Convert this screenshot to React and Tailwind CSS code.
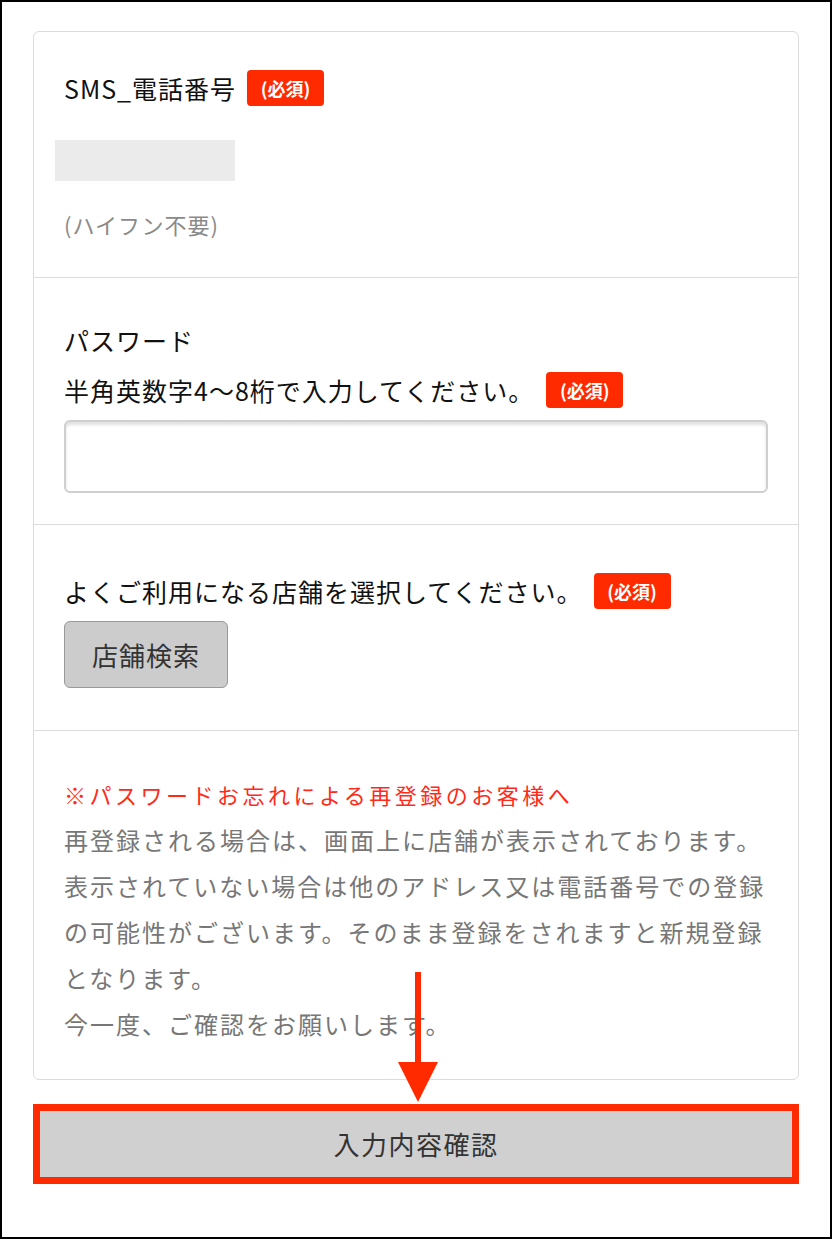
export default function App() {
  const Badge = () => (
    <span className="inline-flex items-center justify-center w-[77px] h-[36px] rounded-[4px] bg-[#ff2a00] text-white text-[18px] font-bold leading-none">
      (必須)
    </span>
  );
  return (
    <div className="relative w-[832px] h-[1239px] border-2 border-black bg-white pt-[29px] px-[31px] font-['Noto_Sans_CJK_JP',sans-serif] text-[#111]">
      <div className="border border-[#dcdcdc] rounded-[6px] flex flex-col">
        {/* Section 1 */}
        <div className="px-[30px] pt-[38px] pb-[38px] border-b border-[#dcdcdc]">
          <div className="flex items-center h-[36px]">
            <span className="text-[25px] leading-none tracking-[1px]">SMS_電話番号</span>
            <span className="ml-[11px]"><Badge /></span>
          </div>
          <div className="-ml-[9px] mt-[34px] w-[180px] h-[41px] bg-[#ebebeb]" />
          <div className="mt-[28px] text-[22px] leading-[30px] tracking-[1px] text-[#8a8a8a]">(ハイフン不要)</div>
        </div>
        {/* Section 2 */}
        <div className="px-[30px] pt-[42px] pb-[31px] border-b border-[#dcdcdc]">
          <div className="text-[25px] leading-[40px] tracking-[1px]">パスワード</div>
          <div className="mt-[12px] flex items-center h-[36px]">
            <span className="text-[25px] leading-none tracking-[1px]">半角英数字4〜8桁で入力してください。</span>
            <span className="ml-[12px]"><Badge /></span>
          </div>
          <div className="mt-[12px] h-[73px] rounded-[6px] border-2 border-[#cfcfcf] bg-white shadow-[inset_0_3px_3px_rgba(0,0,0,0.12)]" />
        </div>
        {/* Section 3 */}
        <div className="px-[30px] pt-[48px] pb-[42px] border-b border-[#dcdcdc]">
          <div className="flex items-center h-[36px]">
            <span className="text-[25px] leading-none tracking-[1px]">よくご利用になる店舗を選択してください。</span>
            <span className="ml-[11px]"><Badge /></span>
          </div>
          <button className="mt-[12px] w-[164px] h-[67px] rounded-[6px] border border-[#999] bg-[#cccccc] text-[26px] tracking-[1px] text-[#333] leading-none">
            店舗検索
          </button>
        </div>
        {/* Section 4 */}
        <div className="px-[30px] pt-[40px] pb-[32px] whitespace-nowrap">
          <div className="text-[22px] leading-[46px] tracking-[3.5px] text-[#ff2a1a]">※パスワードお忘れによる再登録のお客様へ</div>
          <div className="text-[24px] leading-[46px] tracking-[2px] text-[#777]">
            再登録される場合は、画面上に店舗が表示されております。<br />
            表示されていない場合は他のアドレス又は電話番号での登録<br />
            の可能性がございます。そのまま登録をされますと新規登録<br />
            となります。<br />
            今一度、ご確認をお願いします。
          </div>
        </div>
      </div>

      <div className="mt-[24px] h-[80px] border-[7px] border-[#ff2a00] bg-[#d0d0d0] flex items-center justify-center">
        <span className="text-[26px] tracking-[1.5px] text-[#333] leading-none">入力内容確認</span>
      </div>

      {/* annotation arrow */}
      <div className="absolute left-[413px] top-[970px] w-[6px] h-[96px] bg-[#ff2a00]" />
      <svg className="absolute left-[396px] top-[1060px]" width="40" height="40" viewBox="0 0 40 40">
        <polygon points="0,0 40,0 20,40" fill="#ff2a00" />
      </svg>
    </div>
  );
}
